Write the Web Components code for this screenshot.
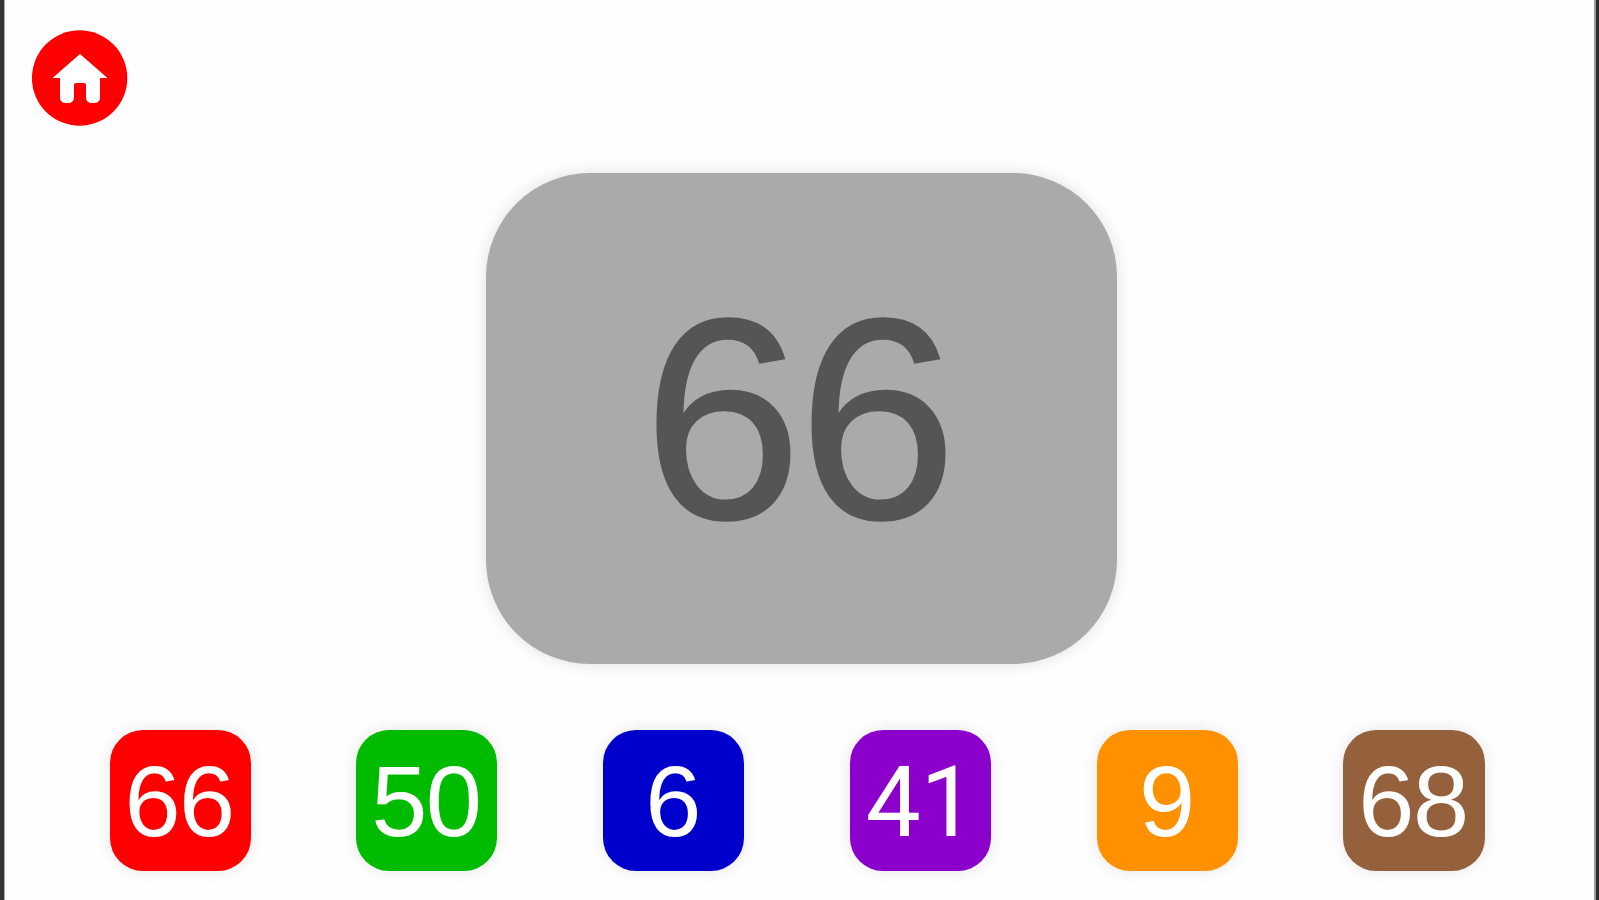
<!DOCTYPE html>
<html lang="en">
<head>
<meta charset="utf-8">
<title>Numbers</title>
<style>
  body {
    margin: 0;
    overflow: hidden;
    font-family: "Liberation Sans", Arial, Helvetica, sans-serif;
  }
</style>
</head>
<body>
<number-game>
  <home-button slot="nav"></home-button>
  <number-card>66</number-card>
  <number-tile slot="tiles" style="--tile: #ff0000">66</number-tile>
  <number-tile slot="tiles" style="--tile: #00bb00">50</number-tile>
  <number-tile slot="tiles" style="--tile: #0000cc">6</number-tile>
  <number-tile slot="tiles" plain-one style="--tile: #8b00cb">41</number-tile>
  <number-tile slot="tiles" style="--tile: #ff9000">9</number-tile>
  <number-tile slot="tiles" style="--tile: #95613d">68</number-tile>
</number-game>

<script>
class BaseElement extends HTMLElement {
  constructor() {
    super();
    this.attachShadow({ mode: 'open' });
    this.shadowRoot.innerHTML = `<style>${this.renderStyle()}</style>${this.render()}`;
  }
}

class NumberGame extends BaseElement {
  render() {
    return `
      <header><slot name="nav"></slot></header>
      <main><slot></slot></main>
      <footer><slot name="tiles"></slot></footer>
    `;
  }
  renderStyle() {
    return `
      :host {
        display: grid;
        grid-template-rows: 173px 491px 1fr;
        box-sizing: border-box;
        width: 1599px;
        height: 900px;
        background: #fefefe;
        border-left: 4px solid #343434;
        border-right: 3px solid #2c2c2c;
        box-shadow: inset 1px 0 #aaa, inset -2px 0 #999;
      }
      header {
        padding: 30px 0 0 27.5px;
      }
      main {
        display: flex;
        justify-content: center;
        padding-left: 2px;
      }
      footer {
        display: flex;
        align-items: flex-start;
        gap: 105.6px;
        padding: 66px 0 0 105.5px;
      }
    `;
  }
}

class HomeButton extends BaseElement {
  render() {
    return `
      <svg viewBox="0 0 96 96" role="img" aria-label="Home">
        <circle cx="47.6" cy="48" r="47.7" fill="#f00"/>
        <path fill="#fff" d="M48 24 L75.5 48 H68 V67 Q68 73 62 73 H60 Q54 73 54 67 V55 Q54 53 52 53 H44 Q42 53 42 55 V67 Q42 73 36 73 H34 Q28 73 28 67 V48 H20.5 Z"/>
      </svg>
    `;
  }
  renderStyle() {
    return `
      :host {
        display: block;
        width: 96px;
        height: 96px;
      }
      svg {
        display: block;
      }
    `;
  }
}

class NumberCard extends BaseElement {
  render() {
    return `<span><slot></slot></span>`;
  }
  renderStyle() {
    return `
      :host {
        display: flex;
        align-items: center;
        justify-content: center;
        width: 631px;
        height: 490.5px;
        border-radius: 104px;
        background: #aaa;
        color: #555;
        box-shadow: 0 0 16px rgba(0, 0, 0, .12);
      }
      span {
        font-size: 286px;
        line-height: 1;
        letter-spacing: -4px;
        padding: 1px 6px 0 0;
        -webkit-text-stroke: 2px #555;
      }
    `;
  }
}

class NumberTile extends BaseElement {
  render() {
    return `<span><slot></slot></span>`;
  }
  renderStyle() {
    return `
      :host {
        display: flex;
        align-items: center;
        justify-content: center;
        width: 141.2px;
        height: 141.2px;
        border-radius: 33px;
        background: var(--tile);
        color: #fff;
        box-shadow: 0 0 16px rgba(0, 0, 0, .1);
      }
      span {
        font-size: 101px;
        line-height: 1;
        letter-spacing: -1.5px;
        padding: 1px 2px 0 0;
      }
      /* a "1" without the foot serif */
      :host([plain-one]) span {
        font-family: Roboto, sans-serif;
        font-size: 98px;
        letter-spacing: -.5px;
        padding: 5px 0 0;
      }
    `;
  }
}

customElements.define('number-game', NumberGame);
customElements.define('home-button', HomeButton);
customElements.define('number-card', NumberCard);
customElements.define('number-tile', NumberTile);
</script>
</body>
</html>
